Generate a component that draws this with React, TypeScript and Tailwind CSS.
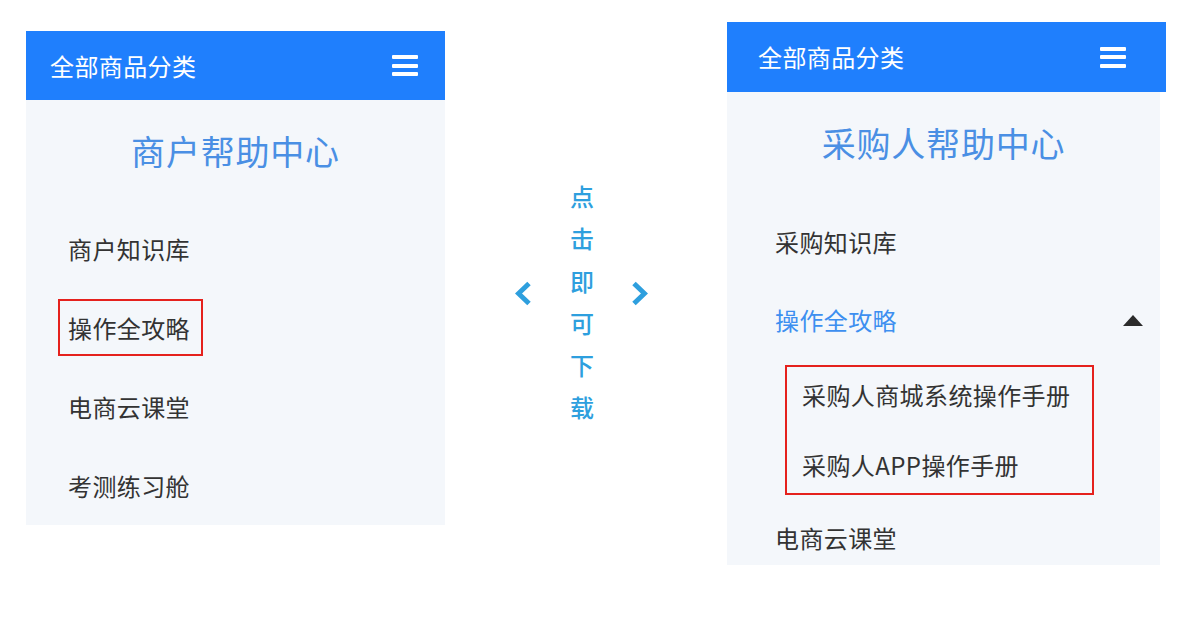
import React from "react";

const font = { fontFamily: '"Noto Sans CJK SC", "Noto Sans", sans-serif' };

function Hamburger() {
  return (
    <div className="flex flex-col gap-[4.5px] w-[26px]">
      <div className="h-[4px] w-full bg-white rounded-[1px]" />
      <div className="h-[4px] w-full bg-white rounded-[1px]" />
      <div className="h-[4px] w-full bg-white rounded-[1px]" />
    </div>
  );
}

function Header({ cls }: { cls: string }) {
  return (
    <div className={`${cls} bg-[#1f7ffd] flex items-center justify-between`}>
      <span className="text-white text-[24px] leading-none tracking-[0.4px]">全部商品分类</span>
      <Hamburger />
    </div>
  );
}

function Item({ children, cls = "h-[79px] pl-[42px]", color = "text-[#333333]" }: { children: React.ReactNode; cls?: string; color?: string }) {
  return (
    <div className={`${cls} flex items-center text-[24px] tracking-[0.4px] ${color}`}>
      {children}
    </div>
  );
}

function Chevron({ dir }: { dir: "left" | "right" }) {
  return (
    <svg width="17" height="25" viewBox="0 0 17 25" className="block">
      <polyline
        points={dir === "left" ? "14,2.5 3.5,12.5 14,22.5" : "3,2.5 13.5,12.5 3,22.5"}
        fill="none"
        stroke="#2e9fde"
        strokeWidth="5"
        strokeLinejoin="miter"
      />
    </svg>
  );
}

export default function App() {
  return (
    <div className="w-[1192px] h-[644px] bg-white flex items-start" style={font}>
      {/* Left panel */}
      <div className="ml-[26px] mt-[31px] w-[419px] flex flex-col">
        <Header cls="h-[69px] w-[419px] pl-[24px] pr-[27px]" />
        <div className="h-[425px] bg-[#f4f7fb] flex flex-col">
          <div className="h-[110px] pt-[27px] flex justify-center">
            <span className="text-[34px] leading-[48px] text-[#4a8fe4] tracking-[0.8px]">商户帮助中心</span>
          </div>
          <Item>商户知识库</Item>
          <Item>
            <span className="-ml-[10px] border-2 border-[#e5211d] pl-[8px] pr-[11px] py-[10px] leading-[33px]">操作全攻略</span>
          </Item>
          <Item>电商云课堂</Item>
          <Item>考测练习舱</Item>
        </div>
      </div>

      {/* Middle */}
      <div className="ml-[70px] mt-[175px] flex items-start">
        <div className="mt-[106px]">
          <Chevron dir="left" />
        </div>
        <div className="ml-[38px] w-[24px] flex flex-col text-[24px] font-medium leading-[42.3px] text-[#2e9fde] text-center">
          <span>点</span>
          <span>击</span>
          <span>即</span>
          <span>可</span>
          <span>下</span>
          <span>载</span>
        </div>
        <div className="ml-[37px] mt-[106px]">
          <Chevron dir="right" />
        </div>
      </div>

      {/* Right panel */}
      <div className="ml-[79px] mt-[22px] w-[439px] flex flex-col">
        <Header cls="h-[70px] w-[439px] pl-[31px] pr-[40px]" />
        <div className="h-[473px] w-[433px] bg-[#f4f7fb] flex flex-col overflow-hidden">
          <div className="h-[111px] shrink-0 pt-[27px] flex justify-center">
            <span className="text-[34px] leading-[48px] text-[#4a8fe4] tracking-[0.8px]">采购人帮助中心</span>
          </div>
          <Item cls="h-[78px] shrink-0 pl-[48px]">采购知识库</Item>
          <div className="h-[78px] shrink-0 flex items-center justify-between pl-[48px] pr-[17px]">
            <span className="text-[24px] tracking-[0.4px] text-[#3d8ff0]">操作全攻略</span>
            <svg width="20" height="11" viewBox="0 0 20 11" className="block">
              <polygon points="10,0 20,11 0,11" fill="#2b2b2b" />
            </svg>
          </div>
          <div className="mt-[6px] ml-[58px] w-[309px] shrink-0 border-2 border-[#e5211d] pt-[12px] pb-[12px] pl-[15px] flex flex-col gap-[38px]">
            <span className="text-[24px] leading-[32px] tracking-[0.4px] text-[#333333]">采购人商城系统操作手册</span>
            <span className="text-[24px] leading-[32px] tracking-[0.4px] text-[#333333]">采购人APP操作手册</span>
          </div>
          <div className="mt-[4px] h-[78px] shrink-0 flex items-center pl-[48px] text-[24px] tracking-[0.4px] text-[#333333]">
            电商云课堂
          </div>
        </div>
      </div>
    </div>
  );
}
